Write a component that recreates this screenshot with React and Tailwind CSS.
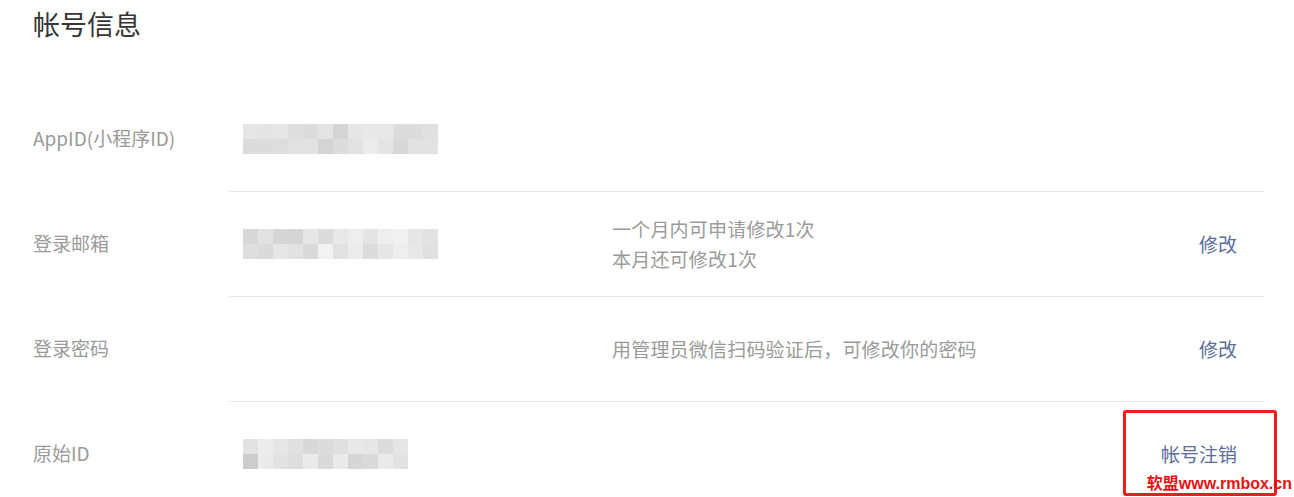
import React from 'react';

const font = { fontFamily: '"Noto Sans CJK SC", "Noto Sans", sans-serif' };

// mosaic blocks standing in for hidden values
const Mosaic = ({ rows }) => (
  <div className="flex flex-col">
    {rows.map((row, i) => (
      <div key={i} className="flex">
        {row.map((c, j) => (
          <div key={j} className="h-[15px] w-[15px]" style={{ backgroundColor: c }} />
        ))}
      </div>
    ))}
  </div>
);

const appIdRows = [
  ['#e6e6e6', '#e4e4e4', '#e6e6e6', '#dedede', '#dcdcdc', '#e4e4e4', '#d4d4d4', '#e6e6e6', '#e8e8e8', '#e8e8e8', '#dcdcdc', '#dcdcdc', '#e0e0e0'],
  ['#dcdcdc', '#dcdcdc', '#dddddd', '#e2e2e2', '#e2e2e2', '#d4d4d4', '#dcdcdc', '#e2e2e2', '#ececec', '#e4e4e4', '#d8d8d8', '#e2e2e2', '#e2e2e2'],
];

const mailRows = [
  ['#d8d8d8', '#e2e2e2', '#d6d6d6', '#d4d4d4', '#e6e6e6', '#dcdcdc', '#e8e8e8', '#eeeeee', '#e4e4e4', '#eeeeee', '#f0f0f0', '#e6e6e6', '#e2e2e2'],
  ['#dedede', '#dadada', '#e6e6e6', '#e2e2e2', '#dadada', '#f2f2f2', '#e2e2e2', '#ececec', '#dcdcdc', '#e6e6e6', '#eeeeee', '#e8e8e8', '#e0e0e0'],
];

const originRows = [
  ['#e2e2e2', '#ececec', '#e6e6e6', '#e0e0e0', '#d8d8d8', '#dcdcdc', '#e0e0e0', '#e8e8e8', '#e6e6e6', '#dcdcdc', '#e6e6e6'],
  ['#cccccc', '#ebebeb', '#e2e2e2', '#dddddd', '#ebebeb', '#dadada', '#ebebeb', '#d6d6d6', '#dadada', '#ebebeb', '#e2e2e2'],
];

const Row = ({ label, value, desc, action, border, boxed }) => (
  <div className="flex h-[105px] items-stretch">
    <div className="flex w-[196px] shrink-0 items-center text-[19px] text-[#9a9a9a]">{label}</div>
    <div className={`flex flex-1 items-center pl-[14px] pr-[27px] ${border ? 'border-t border-[#e7e7e7]' : ''}`}>
      <div className="w-[369px] shrink-0">{value}</div>
      <div className="flex-1 text-[19px] leading-[30px] tracking-[0.2px] text-[#9a9a9a]">{desc}</div>
      {action && (
        <div className="relative">
          {boxed && (
            <div className="absolute -left-[38px] -right-[40px] -top-[30px] -bottom-[28px] rounded-[3px] border-[3px] border-[#f21b1b]" />
          )}
          <span className="text-[19px] text-[#5a6d9c]">{action}</span>
        </div>
      )}
    </div>
  </div>
);

const App = () => {
  return (
    <div className="relative h-[497px] w-[1294px] overflow-hidden bg-white" style={font}>
      <div className="pl-[33px] pr-[30px]">
        <h1 className="h-[86px] pt-[6px] text-[27px] font-normal leading-[36px] text-[#353535]">帐号信息</h1>

        <Row label="AppID(小程序ID)" value={<Mosaic rows={appIdRows} />} />
        <Row
          label="登录邮箱"
          border
          value={<Mosaic rows={mailRows} />}
          desc={<><div>一个月内可申请修改1次</div><div>本月还可修改1次</div></>}
          action="修改"
        />
        <Row label="登录密码" border desc="用管理员微信扫码验证后，可修改你的密码" action="修改" />
        <Row label="原始ID" border value={<Mosaic rows={originRows} />} action="帐号注销" boxed />
      </div>

      {/* watermark */}
      <div className="absolute bottom-[5px] right-[2px] text-[16px] font-bold leading-none text-[#e81010]" style={{ fontFamily: '"Liberation Sans", "Noto Sans CJK SC", sans-serif' }}>
        软盟www.rmbox.cn
      </div>
    </div>
  );
};

export default App;
